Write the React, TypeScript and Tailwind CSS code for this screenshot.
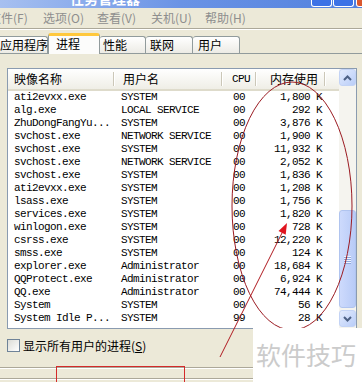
import React from "react";

const rows: [string, string, string, string][] = [
  ["ati2evxx.exe", "SYSTEM", "00", "1,800 K"],
  ["alg.exe", "LOCAL SERVICE", "00", "292 K"],
  ["ZhuDongFangYu...", "SYSTEM", "00", "3,876 K"],
  ["svchost.exe", "NETWORK SERVICE", "00", "1,900 K"],
  ["svchost.exe", "SYSTEM", "00", "11,932 K"],
  ["svchost.exe", "NETWORK SERVICE", "00", "2,052 K"],
  ["svchost.exe", "SYSTEM", "00", "1,836 K"],
  ["ati2evxx.exe", "SYSTEM", "00", "1,208 K"],
  ["lsass.exe", "SYSTEM", "00", "1,756 K"],
  ["services.exe", "SYSTEM", "00", "1,820 K"],
  ["winlogon.exe", "SYSTEM", "00", "728 K"],
  ["csrss.exe", "SYSTEM", "00", "12,220 K"],
  ["smss.exe", "SYSTEM", "00", "124 K"],
  ["explorer.exe", "Administrator", "00", "18,684 K"],
  ["QQProtect.exe", "Administrator", "00", "6,924 K"],
  ["QQ.exe", "Administrator", "00", "74,444 K"],
  ["System", "SYSTEM", "00", "56 K"],
  ["System Idle P...", "SYSTEM", "99", "28 K"],
];

const menus = ["文件(F)", "选项(O)", "查看(V)", "关机(U)", "帮助(H)"];

function Chevron({ up }: { up: boolean }) {
  return (
    <svg width="9" height="6" viewBox="0 0 9 6">
      <path
        d={up ? "M1 5 L4.5 1.5 L8 5" : "M1 1 L4.5 4.5 L8 1"}
        fill="none"
        stroke="#4d6185"
        strokeWidth="2"
      />
    </svg>
  );
}

function HeaderDivider() {
  return <div className="w-px h-[14px] bg-[#cbc7b8] shadow-[1px_0_0_#ffffff]" />;
}

export default function App() {
  return (
    <div className="relative w-[362px] h-[382px] overflow-hidden bg-[#ece9d8] text-black font-['Noto_Sans_CJK_SC',sans-serif]">
      {/* title bar */}
      <div className="h-[8px] flex overflow-hidden bg-linear-to-r from-[#a7c0f0] via-[#6a93e5] to-[#5180de]">
        <div className="ml-[70px] mt-[-10px] text-[14px] leading-[16px] font-bold text-white whitespace-nowrap">
          任务管理器
        </div>
        <div className="ml-auto mr-[-15px] flex shrink-0 items-start">
          <div className="w-[21px] h-[7px] rounded-b-[3px] border border-t-0 border-white bg-[#3c72e6]" />
          <div className="ml-[1px] w-[21px] h-[7px] rounded-b-[3px] border border-t-0 border-white bg-[#3c72e6]" />
          <div className="ml-[2px] w-[21px] h-[7px] rounded-b-[3px] border border-t-0 border-white bg-[#d9582f]" />
        </div>
      </div>

      {/* menu bar */}
      <div className="h-[20px] flex items-center ml-[-11px] text-[12px] text-[#8e8e8e] whitespace-nowrap">
        {menus.map((m) => (
          <div key={m} className="w-[54px] shrink-0">
            {m}
          </div>
        ))}
      </div>
      <div className="h-px bg-[#aca899]" />
      <div className="h-px bg-white" />

      {/* tabs */}
      <div className="h-[23px] flex items-end text-[12px] whitespace-nowrap">
        <div className="ml-[-4px] w-[52px] h-[17px] flex items-center pl-[3px] border border-b-0 border-[#919b9c] rounded-t-[3px] bg-linear-to-b from-white to-[#ecebe5]">
          应用程序
        </div>
        <div className="relative z-10 mb-[-1px] w-[52px] h-[21px] flex items-center pl-[7px] pb-[2px] border-x border-[#919b9c] border-t-[3px] border-t-[#ffc83c] rounded-t-[3px] bg-[#fcfcfb]">
          进程
        </div>
        <div className="w-[46px] h-[17px] flex items-center pl-[3px] border border-b-0 border-l-0 border-[#919b9c] rounded-t-[3px] bg-linear-to-b from-white to-[#ecebe5]">
          性能
        </div>
        <div className="w-[47px] h-[17px] flex items-center pl-[4px] border border-b-0 border-l-0 border-[#919b9c] rounded-t-[3px] bg-linear-to-b from-white to-[#ecebe5]">
          联网
        </div>
        <div className="w-[47px] h-[17px] flex items-center pl-[5px] border border-b-0 border-l-0 border-[#919b9c] rounded-t-[3px] bg-linear-to-b from-white to-[#ecebe5]">
          用户
        </div>
      </div>

      {/* panel */}
      <div className="border-t border-[#919b9c]">
        <div className="ml-[7px] mt-[14px] w-[350px] h-[261px] border border-[#8a9bb0] bg-white flex">
          <div className="w-[331px] flex flex-col">
            {/* header */}
            <div className="h-[22px] flex border-b-2 border-[#dedbcb] bg-linear-to-b from-white to-[#efeee6] text-[12px] whitespace-nowrap">
              <div className="w-[106px] flex items-center pl-[6px]">
                <span>映像名称</span>
                <div className="ml-auto">
                  <HeaderDivider />
                </div>
              </div>
              <div className="w-[108px] flex items-center pl-[9px]">
                <span>用户名</span>
                <div className="ml-auto">
                  <HeaderDivider />
                </div>
              </div>
              <div className="w-[34px] flex items-center pl-[10px]">
                <span className="font-['Liberation_Mono',monospace] text-[11px] tracking-[-0.6px]">CPU</span>
                <div className="ml-auto">
                  <HeaderDivider />
                </div>
              </div>
              <div className="w-[69px] flex items-center">
                <span className="ml-auto mr-[6px]">内存使用</span>
                <HeaderDivider />
              </div>
            </div>
            {/* rows */}
            <div className="flex flex-col font-['Liberation_Mono',monospace] text-[11px] tracking-[-0.6px] leading-[13px] whitespace-nowrap">
              {rows.map((r, i) => (
                <div key={i} className="h-[13px] flex items-center">
                  <div className="w-[106px] pl-[6px] overflow-hidden">{r[0]}</div>
                  <div className="w-[108px] pl-[7px] overflow-hidden">{r[1]}</div>
                  <div className="w-[34px] pl-[11px]">{r[2]}</div>
                  <div className="w-[69px] pr-[3px] text-right">{r[3]}</div>
                </div>
              ))}
            </div>
          </div>
          {/* scrollbar */}
          <div className="w-[17px] flex flex-col bg-[#f5f4ef]">
            <div className="h-[17px] rounded-[3px] border border-[#c3d3f5] bg-linear-to-br from-[#e3ebfd] to-[#b9cdf8] flex items-center justify-center">
              <Chevron up />
            </div>
            <div className="mt-[124px] h-[98px] rounded-[3px] border border-[#b0c4ef] bg-linear-to-r from-[#cddafc] to-[#b8cbf7] flex flex-col items-center justify-center gap-[1px]">
              <div className="w-[7px] h-px bg-[#eef3fe] shadow-[0_1px_0_#8ea7dd]" />
              <div className="w-[7px] h-px bg-[#eef3fe] shadow-[0_1px_0_#8ea7dd]" />
              <div className="w-[7px] h-px bg-[#eef3fe] shadow-[0_1px_0_#8ea7dd]" />
              <div className="w-[7px] h-px bg-[#eef3fe] shadow-[0_1px_0_#8ea7dd]" />
            </div>
            <div className="mt-[2px] h-[17px] rounded-[3px] border border-[#c3d3f5] bg-linear-to-br from-[#e3ebfd] to-[#b9cdf8] flex items-center justify-center">
              <Chevron up={false} />
            </div>
          </div>
        </div>

        {/* checkbox */}
        <div className="mt-[10px] ml-[7px] h-[13px] flex items-center text-[12px] whitespace-nowrap">
          <div className="w-[13px] h-[13px] border border-[#6f8398] bg-linear-to-br from-[#dcdcd6] to-white" />
          <span className="ml-[3px]">
            显示所有用户的进程(<span className="underline">S</span>)
          </span>
        </div>

        <div className="mt-[15px] h-px bg-[#aca899]" />
        <div className="h-px bg-white" />
        <div className="mt-[9px] h-px bg-[#aca899]" />
        <div className="h-px bg-white" />
      </div>

      {/* annotations */}
      <svg className="absolute left-0 top-0 pointer-events-none" width="362" height="382" viewBox="0 0 362 382">
        <ellipse cx="292" cy="206" rx="60" ry="124" fill="none" stroke="#9b1b22" strokeWidth="1" />
        <line x1="220" y1="357" x2="283" y2="231" stroke="#b01a20" strokeWidth="1" />
        <polygon points="287,223 285.7,234.7 278.5,231.1" fill="#e0141e" />
      </svg>

      <div className="absolute left-[56px] top-[366px] w-[129px] h-[20px] border border-[#d42a2a]" />

      <div className="absolute left-[253px] top-[328px] w-[109px] h-[54px] bg-white flex items-center pl-[3px] text-[25px] text-[#cbcbcb] whitespace-nowrap">
        软件技巧
      </div>
    </div>
  );
}
